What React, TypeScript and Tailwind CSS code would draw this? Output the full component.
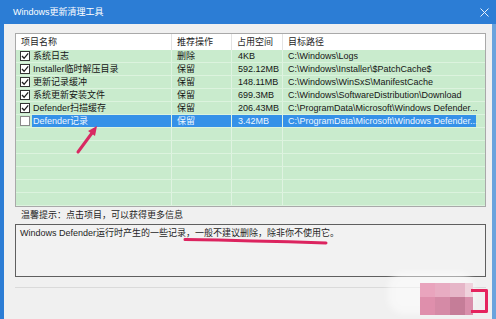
const rows = [
  { name: "系统日志", op: "删除", size: "4KB", path: "C:\\Windows\\Logs", checked: true },
  { name: "Installer临时解压目录", op: "保留", size: "592.12MB", path: "C:\\Windows\\Installer\\$PatchCache$", checked: true },
  { name: "更新记录缓冲", op: "保留", size: "148.11MB", path: "C:\\Windows\\WinSxS\\ManifestCache", checked: true },
  { name: "系统更新安装文件", op: "保留", size: "699.3MB", path: "C:\\Windows\\SoftwareDistribution\\Download", checked: true },
  { name: "Defender扫描缓存", op: "保留", size: "206.43MB", path: "C:\\ProgramData\\Microsoft\\Windows Defender...", checked: true },
  { name: "Defender记录", op: "保留", size: "3.42MB", path: "C:\\ProgramData\\Microsoft\\Windows Defender...", checked: false, selected: true },
];

const grid = "grid grid-cols-[155px_60px_51px_194px_1fr]";

const CheckBox = ({ on }: { on: boolean }) => (
  <svg width="10" height="10" viewBox="0 0 10 10" className="shrink-0">
    <rect x="0.5" y="0.5" width="9" height="9" fill="#fff" stroke={on ? "#333" : "#8a8a8a"} />
    {on && <path d="M2 5 L4.1 7.3 L8.2 2.4" fill="none" stroke="#1f1f1f" strokeWidth="1.3" />}
  </svg>
);

const App = () => {
  return (
    <div className="relative w-[496px] h-[319px] overflow-hidden bg-[#f0f0f0] flex flex-col font-['Liberation_Sans','Noto_Sans_CJK_SC',sans-serif] text-[9px] text-[#151515]">
      {/* title bar */}
      <div className="h-[24px] shrink-0 bg-[#2c7dd5] flex items-center justify-between pl-[13px] pr-[7px] text-white">
        <span className="leading-none">Windows更新清理工具</span>
        <svg width="9" height="9" viewBox="0 0 9 9">
          <path d="M0.5 0.5 L8.5 8.5 M8.5 0.5 L0.5 8.5" stroke="#e8f1fb" strokeWidth="1" />
        </svg>
      </div>

      <div className="flex-1 flex flex-col border-l-[4px] border-r-[4px] border-l-[#2c7dd5] border-r-[#6aa3dd] pl-[11px] pr-[6px] pt-[9px]">
        {/* list */}
        <div className="h-[174px] shrink-0 border border-[#a9a9a9] flex flex-col overflow-hidden">
          <div className={`${grid} h-[16px] bg-white text-[#1e1e1e] leading-[16px]`}>
            <div className="pl-[5px]">项目名称</div>
            <div className="pl-[5px] border-l border-[#e3e3e3]">推荐操作</div>
            <div className="pl-[5px] border-l border-[#e3e3e3]">占用空间</div>
            <div className="pl-[5px] border-l border-[#e3e3e3]">目标路径</div>
            <div />
          </div>
          <div className="flex-1 bg-[#c9ebcd]">
            {rows.map((r) => (
              <div key={r.name} className={`${grid} h-[13px] leading-[12px] border-b border-[#dcf3de]`}>
                <div className="flex items-center pl-[4px] gap-[2px]">
                  <CheckBox on={r.checked} />
                  <span className={`flex-1 h-full pl-[1px] whitespace-nowrap ${r.selected ? "bg-[#3591e8] text-[#eef6ff]" : ""}`}>
                    {r.name}
                  </span>
                </div>
                <div className={`pl-[5px] border-l border-[#dff3e1] ${r.selected ? "bg-[#3591e8] text-[#eef6ff] border-[#3591e8]" : ""}`}>{r.op}</div>
                <div className={`pl-[6px] border-l border-[#dff3e1] ${r.selected ? "bg-[#3591e8] text-[#eef6ff] border-[#3591e8]" : ""}`}>{r.size}</div>
                <div className={`pl-[5px] border-l border-[#dff3e1] whitespace-nowrap ${r.selected ? "bg-[#3591e8] text-[#eef6ff] border-[#3591e8]" : ""}`}>{r.path}</div>
                <div />
              </div>
            ))}
            {Array.from({ length: 6 }).map((_, i) => (
              <div key={i} className={`${grid} h-[13px] border-b border-[#dcf3de]`}>
                <div />
                <div className="border-l border-[#dff3e1]" />
                <div className="border-l border-[#dff3e1]" />
                <div className="border-l border-[#dff3e1]" />
                <div />
              </div>
            ))}
          </div>
        </div>

        <div className="h-[17px] shrink-0 pl-[6px] leading-[17px] text-[#1e1e1e]">温馨提示：点击项目，可以获得更多信息</div>

        <div className="h-[53px] shrink-0 border border-[#5f5f5f] bg-[#f2f2f2] pl-[4px] pt-[2px] leading-[13px] text-[#1e1e1e]">
          Windows Defender运行时产生的一些记录，一般不建议删除，除非你不使用它。
        </div>

        <div className="mt-[10px] border-t border-[#dadada]" />
      </div>

      {/* annotations */}
      <svg className="absolute inset-0 pointer-events-none" width="496" height="319" viewBox="0 0 496 319">
        <path d="M185 239.5 Q 250 240.5 326 243" fill="none" stroke="#dc245f" strokeWidth="3" strokeLinecap="round" />
        <path d="M78 152 L92 133" fill="none" stroke="#d82a62" strokeWidth="3" strokeLinecap="round" />
        <path d="M97 126 L88 131 L95 136 Z" fill="#d82a62" />
      </svg>

      {/* watermark */}
      <div className="absolute left-[388px] top-[272px] w-[86px] h-[42px] rounded-[16px] bg-white/50 blur-[3px]" />
      <div className="absolute left-[420px] top-[283px] grid grid-cols-[15px_15px_15px_8px] grid-rows-[14px_18px]">
        <div className="bg-[#e9a4bd]" />
        <div className="bg-[#e8acc2]" />
        <div className="bg-[#e6b6c8]" />
        <div className="bg-[#efd2dc]" />
        <div className="bg-[#df8fac]" />
        <div className="bg-[#d58aa6]" />
        <div className="bg-[#c57d98]" />
        <div className="bg-[#d98fab]" />
      </div>
      <div className="absolute left-[471px] top-[289px] w-[17px] h-[24px] border-[3px] border-l-0 border-[#e5245e] rounded-r-[2px]" />
    </div>
  );
};

export default App;
